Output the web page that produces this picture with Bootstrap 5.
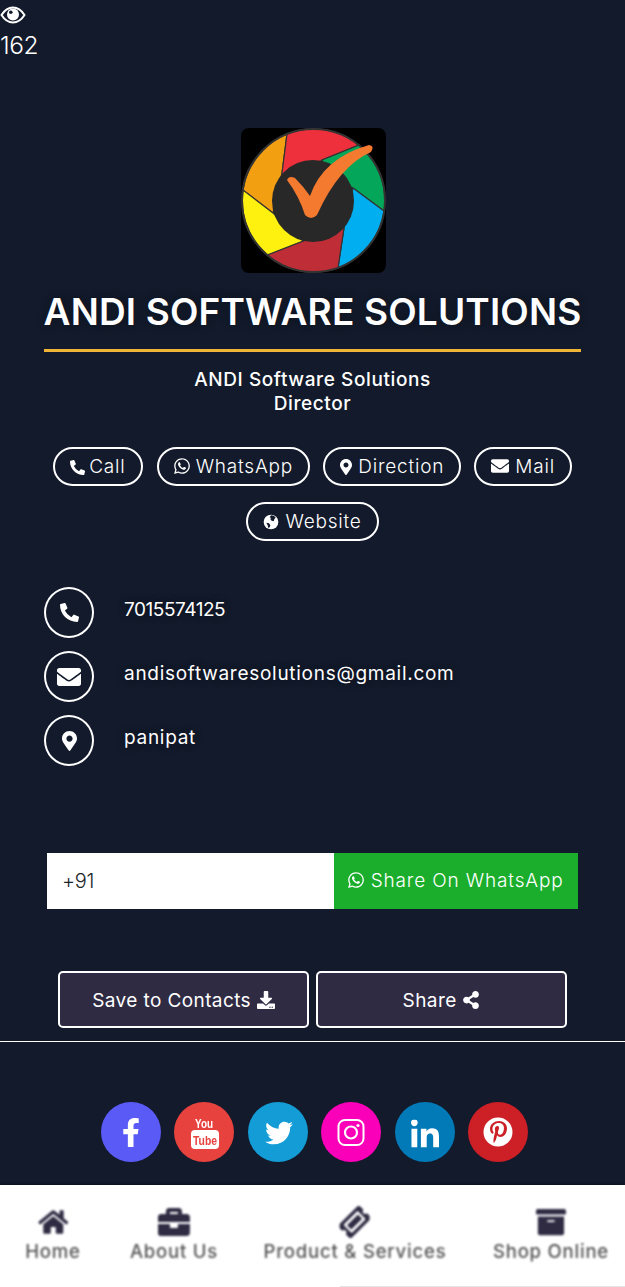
<!DOCTYPE html>
<html lang="en">
<head>
  <meta charset="UTF-8">
  <meta name="viewport" content="width=device-width, initial-scale=1.0">
  <title>ANDI Software Solutions</title>
  <link href="https://cdn.jsdelivr.net/npm/bootstrap@5.3.3/dist/css/bootstrap.min.css" rel="stylesheet">
  <style>
    body {
      background-color: #121a2b;
      color: #fff;
      font-family: Inter, "Open Sans", sans-serif;
      height: 1287px;
      overflow: hidden;
    }
    svg { fill: currentColor; display: inline-block; vertical-align: -2px; }
    .views { height: 128px; font-size: 24.5px; line-height: 26px; font-weight: 300; padding-top: 5px; letter-spacing: -.5px; }
    .views svg { display: block; width: 26px; height: 20px; margin-bottom: 7px; fill: none; }
    .logo-box { width: 145px; height: 145px; background: #000; border-radius: 8px; margin-left: 241px; }
    .logo-box svg { display: block; width: 145px; height: 145px; }
    .biz-name { font-size: 37px; line-height: 42px; font-weight: 600; letter-spacing: .17px; margin: 18px 0 0; text-shadow: 0 0 10px rgba(0,0,0,.35); white-space: nowrap; }
    .gold-rule { width: 537px; height: 3px; background: #f0b437; margin: 16px auto 16px; }
    .biz-role { font-size: 19px; line-height: 24px; font-weight: 500; letter-spacing: .6px; }
    .pill-wrap { margin-top: 31px; row-gap: 16px; column-gap: 13px; height: 93px; }
    .pill-btn { color: #fff; border: 2px solid #fff; font-size: 19px; line-height: 24px; padding: 6px 15px 4px; height: 39px; background: transparent; font-weight: 300; white-space: nowrap; letter-spacing: .8px; }
    .call-pill { margin-right: 1px; }
    .ic-phone { width: 15px; height: 15px; margin-right: -2px; }
    .ic-wa { width: 16px; height: 18px; }
    .ic-pin { width: 12px; height: 16px; }
    .ic-mail { width: 18px; height: 18px; }
    .ic-globe { width: 16px; height: 16px; }
    .contact-list { margin: 47px 0 0 44px; row-gap: 13px; }
    .contact-ring { width: 50px; height: 51px; border: 2px solid #fff; flex-shrink: 0; }
    .ring-phone { width: 19px; height: 19px; vertical-align: 0; }
    .ring-mail { width: 24px; height: 24px; vertical-align: 0; }
    .ring-pin { width: 15px; height: 20px; vertical-align: 0; }
    .contact-text { font-size: 19px; line-height: 24px; margin-left: 30px; padding-top: 11px; letter-spacing: .72px; text-shadow: 0 0 8px rgba(0,0,0,.4); }
    .phone-num { letter-spacing: -.45px; }
    .share-row { margin: 87px 47px 0; height: 56px; }
    .phone-field { flex: 0 0 287px; background: #fff; color: #212529; font-size: 20px; padding: 0 15px; border: 0; border-radius: 0; font-weight: 300; letter-spacing: -.3px; }
    .wa-btn { background: #1bae2c; color: #fff; flex: 1; border: 0; border-radius: 0; font-size: 19px; font-weight: 300; white-space: nowrap; padding: 1px 0 0; letter-spacing: .85px; }
    .save-row { margin: 62px 58px 0; column-gap: 7px; }
    .dark-btn { width: 251px; height: 57px; background: #2f2b43; color: #fff; border: 2px solid #fff; border-radius: 5px; font-size: 19px; font-weight: 400; letter-spacing: .4px; padding-top: 9px; }
    .dark-btn svg { width: 18px; height: 18px; }
    .white-rule { height: 1px; background: #fff; margin-top: 13px; }
    .social-row { margin-top: 60px; padding-left: 4px; column-gap: 13.4px; height: 83px; filter: blur(.7px); }
    .social-dot { width: 60px; height: 60px; color: #fff; flex-shrink: 0; }
    .bottom-bar { height: 102px; background: #fff; box-shadow: 0 -1px 2px rgba(0,0,0,.4); position: relative; }
    .bar-item { position: absolute; top: 21px; transform: translateX(-50%); color: #2f2b43; white-space: nowrap; text-align: center; filter: blur(.8px); }
    .bar-item svg { display: block; margin: 0 auto 1px; width: 30px; height: 32px; }
    .bar-item .bar-brief { width: 32px; }
    .bar-item span { display: block; color: #555; font-size: 18.5px; line-height: 24px; font-weight: 500; letter-spacing: .8px; }
    .corner-line { position: absolute; left: 340px; right: 0; bottom: 0; height: 1px; background: #e4e4e4; }
  </style>
</head>
<body>
  <!-- view counter -->
  <div class="views">
    <svg viewBox="0 0 26 20"><path d="M1.500 10C5 4.500 9 2.500 13 2.500S21 4.500 24.500 10C21 15.500 17 17.500 13 17.500S5 15.500 1.500 10Z" stroke="#fff" stroke-width="2"/><circle cx="13" cy="9.500" r="6" fill="#fff"/><circle cx="10.800" cy="7.200" r="1.800" fill="#121a2b"/></svg>
    <div>162</div>
  </div>

  <!-- logo + name -->
  <div class="logo-box">
    <svg viewBox="0 0 145 145">
      <g stroke="#333" stroke-width="1.200">
        <path fill="#f29f12" d="M46 6 L41 45 L32 85 L2 62 A72 72 0 0 1 46 6Z"/>
        <path fill="#ee2f3c" d="M46 6 A72 72 0 0 1 118 17 L81 32 L50 60 L41 45Z"/>
        <path fill="#04a659" d="M81 32 L118 17 A72 72 0 0 1 143 83 L112 60 L90 50Z"/>
        <path fill="#01aef0" d="M112 60 L143 83 A72 72 0 0 1 97 140 L103 100Z"/>
        <path fill="#bf2e36" d="M103 100 L97 140 A72 72 0 0 1 26 127 L62 113Z"/>
        <path fill="#fff10f" d="M32 85 L62 113 L26 127 A72 72 0 0 1 2 62Z"/>
        <circle cx="72.500" cy="72.500" r="71.500" fill="none" stroke-width="2"/>
      </g>
      <circle cx="72" cy="73" r="41" fill="#282828"/>
      <path fill="#f47a30" d="M46 52 Q48 47 54 50 Q62 58 69 68 Q82 30 128 17 Q134 18 130 24 Q98 38 76 87 Q70 93 64 87 Q58 68 46 52Z"/>
    </svg>
  </div>
  <h1 class="biz-name text-center">ANDI SOFTWARE SOLUTIONS</h1>
  <div class="gold-rule"></div>
  <div class="biz-role text-center">ANDI Software Solutions<br>Director</div>

  <!-- action pills -->
  <div class="pill-wrap d-flex flex-wrap justify-content-center">
    <a href="#" class="btn rounded-pill pill-btn call-pill"><svg class="ic-phone" viewBox="0 0 512 512"><use href="#i-phone"/></svg> Call</a>
    <a href="#" class="btn rounded-pill pill-btn"><svg class="ic-wa" viewBox="0 0 448 512"><use href="#i-wa"/></svg> WhatsApp</a>
    <a href="#" class="btn rounded-pill pill-btn"><svg class="ic-pin" viewBox="0 0 384 512"><use href="#i-pin"/></svg> Direction</a>
    <a href="#" class="btn rounded-pill pill-btn"><svg class="ic-mail" viewBox="0 0 512 512"><use href="#i-mail"/></svg> Mail</a>
    <a href="#" class="btn rounded-pill pill-btn"><svg class="ic-globe" viewBox="0 0 24 24"><circle cx="12" cy="12" r="11"/><path fill="#121a2b" d="M12 2c3 0 5 1 7 3l-2 3-1 3-3-1-2-2 1-2-2-1zM5 13l4 1 2 3-1 3-2 1-1-4z"/></svg> Website</a>
  </div>

  <!-- contact details -->
  <div class="contact-list d-flex flex-column">
    <div class="d-flex">
      <div class="contact-ring rounded-circle d-flex align-items-center justify-content-center"><svg class="ring-phone" viewBox="0 0 512 512"><use href="#i-phone"/></svg></div>
      <div class="contact-text phone-num">7015574125</div>
    </div>
    <div class="d-flex">
      <div class="contact-ring rounded-circle d-flex align-items-center justify-content-center"><svg class="ring-mail" viewBox="0 0 512 512"><use href="#i-mail"/></svg></div>
      <div class="contact-text">andisoftwaresolutions@gmail.com</div>
    </div>
    <div class="d-flex">
      <div class="contact-ring rounded-circle d-flex align-items-center justify-content-center"><svg class="ring-pin" viewBox="0 0 384 512"><use href="#i-pin"/></svg></div>
      <div class="contact-text">panipat</div>
    </div>
  </div>

  <!-- share on whatsapp -->
  <div class="share-row d-flex">
    <input class="form-control phone-field" type="text" value="+91">
    <button class="btn wa-btn"><svg class="ic-wa" viewBox="0 0 448 512"><use href="#i-wa"/></svg> Share On WhatsApp</button>
  </div>

  <div class="save-row d-flex">
    <button class="btn dark-btn">Save to Contacts <svg viewBox="0 0 512 512"><path d="M216 0h80c13.300 0 24 10.700 24 24v168h87.700c17.800 0 26.700 21.500 14.100 34.100L269.700 378.300c-7.500 7.500-19.800 7.500-27.300 0L90.100 226.100c-12.600-12.600-3.700-34.100 14.100-34.100H192V24c0-13.300 10.700-24 24-24zm296 376v112c0 13.300-10.700 24-24 24H24c-13.300 0-24-10.700-24-24V376c0-13.300 10.700-24 24-24h146.700l49 49c20.100 20.100 52.500 20.100 72.600 0l49-49H488c13.300 0 24 10.700 24 24zm-124 88c0-11-9-20-20-20s-20 9-20 20 9 20 20 20 20-9 20-20zm64 0c0-11-9-20-20-20s-20 9-20 20 9 20 20 20 20-9 20-20z"/></svg></button>
    <button class="btn dark-btn">Share <svg viewBox="0 0 448 512"><path d="M352 320c-22.608 0-43.387 7.819-59.790 20.895l-102.486-64.054a96.551 96.551 0 0 0 0-41.683l102.486-64.054C308.613 184.181 329.392 192 352 192c53.019 0 96-42.981 96-96S405.019 0 352 0s-96 42.981-96 96c0 7.158.79 14.130 2.276 20.841L155.790 180.895C139.387 167.819 118.608 160 96 160c-53.019 0-96 42.981-96 96s42.981 96 96 96c22.608 0 43.387-7.819 59.790-20.895l102.486 64.054A96.301 96.301 0 0 0 256 416c0 53.019 42.981 96 96 96s96-42.981 96-96-42.981-96-96-96z"/></svg></button>
  </div>
  <div class="white-rule"></div>

  <!-- social links -->
  <div class="social-row d-flex justify-content-center">
    <svg class="social-dot" viewBox="0 0 60 60"><circle cx="30" cy="30" r="30" fill="#5a5bf6"/><svg x="21" y="16" width="18" height="29" viewBox="0 0 320 512"><path fill="#fff" d="M279.140 288l14.220-92.660h-88.910v-60.130c0-25.350 12.420-50.060 52.240-50.060h40.420V6.260S260.430 0 225.360 0c-73.220 0-121.080 44.380-121.080 124.720v70.620H22.890V288h81.390v224h100.170V288z"/></svg></svg>
    <svg class="social-dot" viewBox="0 0 60 60"><circle cx="30" cy="30" r="30" fill="#e8423e"/><text x="30" y="26" text-anchor="middle" font-family="Liberation Sans" font-weight="700" font-size="12" textLength="18" lengthAdjust="spacingAndGlyphs" fill="#fff">You</text><rect x="17" y="28" width="28" height="19" rx="4" fill="#fff"/><text x="31" y="42.500" text-anchor="middle" font-family="Liberation Sans" font-weight="700" font-size="13" textLength="24" lengthAdjust="spacingAndGlyphs" fill="#e8423e">Tube</text></svg>
    <svg class="social-dot" viewBox="0 0 60 60"><circle cx="30" cy="30" r="30" fill="#149cd6"/><svg x="17" y="17" width="28" height="28" viewBox="0 0 512 512"><path fill="#fff" d="M459.370 151.716c.325 4.548.325 9.097.325 13.645 0 138.720-105.583 298.558-298.558 298.558-59.452 0-114.680-17.219-161.137-47.106 8.447.974 16.568 1.299 25.340 1.299 49.055 0 94.213-16.568 130.274-44.832-46.132-.975-84.792-31.188-98.112-72.772 6.498.974 12.995 1.624 19.818 1.624 9.421 0 18.843-1.300 27.614-3.573-48.081-9.747-84.143-51.980-84.143-102.985v-1.299c13.969 7.797 30.214 12.670 47.431 13.319-28.264-18.843-46.781-51.005-46.781-87.391 0-19.492 5.197-37.360 14.294-52.954 51.655 63.675 129.300 105.258 216.365 109.807-1.624-7.797-2.599-15.918-2.599-24.040 0-57.828 46.782-104.934 104.934-104.934 30.213 0 57.502 12.670 76.670 33.137 23.715-4.548 46.456-13.320 66.599-25.340-7.798 24.366-24.366 44.833-46.132 57.827 21.117-2.273 41.584-8.122 60.426-16.243-14.292 20.791-32.161 39.308-52.628 54.253z"/></svg></svg>
    <svg class="social-dot" viewBox="0 0 60 60"><circle cx="30" cy="30" r="30" fill="#fa00b8"/><rect x="17.500" y="18" width="25" height="25" rx="6.500" fill="none" stroke="#fff" stroke-width="2"/><circle cx="30" cy="30.500" r="6" fill="none" stroke="#fff" stroke-width="2.200"/><circle cx="37" cy="23.500" r="1.600" fill="#fff"/></svg>
    <svg class="social-dot" viewBox="0 0 60 60"><circle cx="30" cy="30" r="30" fill="#027ab8"/><svg x="16" y="17.500" width="28" height="28" viewBox="0 0 448 448"><path fill="#fff" d="M100.280 448H7.400V148.900h92.880zM53.790 108.100C24.090 108.100 0 83.500 0 53.800a53.790 53.790 0 0 1 107.580 0c0 29.700-24.100 54.300-53.790 54.300zM447.900 448h-92.680V302.400c0-34.700-.7-79.200-48.290-79.200-48.290 0-55.690 37.700-55.690 76.700V448h-92.780V148.900h89.080v40.800h1.300c12.400-23.500 42.690-48.300 87.880-48.300 94 0 111.280 61.900 111.280 142.300V448z"/></svg></svg>
    <svg class="social-dot" viewBox="0 0 60 60"><circle cx="30" cy="30" r="30" fill="#cc1f26"/><circle cx="30" cy="30" r="14.500" fill="#fff"/><svg x="22" y="17" width="17" height="26" viewBox="0 0 384 512"><path fill="#cc1f26" d="M204 6.500C101.400 6.500 0 74.900 0 185.600 0 256 39.600 296 63.600 296c9.900 0 15.600-27.600 15.600-35.400 0-9.300-23.700-29.100-23.700-67.800 0-80.400 61.200-137.400 140.400-137.400 68.100 0 118.500 38.700 118.500 109.800 0 53.100-21.300 152.700-90.300 152.700-24.900 0-46.200-18-46.200-43.800 0-37.800 26.400-74.400 26.400-113.400 0-66.200-93.900-54.200-93.900 25.800 0 16.800 2.100 35.400 9.600 50.700-13.800 59.400-42 147.900-42 209.100 0 18.900 2.700 37.500 4.500 56.400 3.400 3.800 1.700 3.400 6.900 1.500 50.400-69 48.600-82.500 71.400-172.800 12.300 23.400 44.100 36 69.300 36 106.200 0 153.900-103.500 153.900-196.800C384 71.300 298.200 6.500 204 6.500z"/></svg></svg>
  </div>

  <!-- bottom nav -->
  <div class="bottom-bar">
    <a class="bar-item text-decoration-none" href="#" style="left:53px"><svg viewBox="0 0 576 512"><path d="M280.370 148.260L96 300.110V464a16 16 0 0 0 16 16l112.060-.29a16 16 0 0 0 15.920-16V368a16 16 0 0 1 16-16h64a16 16 0 0 1 16 16v95.640a16 16 0 0 0 16 16.050L464 480a16 16 0 0 0 16-16V300L295.670 148.260a12.190 12.190 0 0 0-15.300 0zM571.600 251.470L488 182.560V44.050a12 12 0 0 0-12-12h-56a12 12 0 0 0-12 12v72.610L318.470 43a48 48 0 0 0-61 0L4.340 251.470a12 12 0 0 0-1.600 16.900l25.500 31A12 12 0 0 0 45.150 301l235.220-193.740a12.190 12.190 0 0 1 15.300 0L530.900 301a12 12 0 0 0 16.900-1.600l25.500-31a12 12 0 0 0-1.700-16.930z"/></svg><span>Home</span></a>
    <a class="bar-item text-decoration-none" href="#" style="left:174px"><svg class="bar-brief" viewBox="0 0 512 512"><path d="M320 336c0 8.840-7.160 16-16 16h-96c-8.840 0-16-7.160-16-16v-48H0v144c0 25.600 22.400 48 48 48h416c25.600 0 48-22.400 48-48V288H320v48zm144-208h-80V80c0-25.600-22.400-48-48-48H176c-25.600 0-48 22.400-48 48v48H48c-25.600 0-48 22.400-48 48v80h512v-80c0-25.600-22.400-48-48-48zm-144 0H192V96h128v32z"/></svg><span>About Us</span></a>
    <a class="bar-item text-decoration-none" href="#" style="left:355px"><svg viewBox="0 0 576 576"><g transform="rotate(-45 288 288)"><rect x="140" y="230" width="296" height="116" fill="currentColor"/><path fill-rule="evenodd" d="M528 288c0 26.510 21.490 48 48 48v80c0 26.510-21.490 48-48 48H48c-26.510 0-48-21.490-48-48v-80c26.510 0 48-21.490 48-48s-21.490-48-48-48v-80c0-26.510 21.490-48 48-48h480c26.510 0 48 21.490 48 48v80c-26.510 0-48 21.490-48 48zM120 176c-13.255 0-24 10.745-24 24v176c0 13.255 10.745 24 24 24h336c13.255 0 24-10.745 24-24V200c0-13.255-10.745-24-24-24z"/></g></svg><span>Product &amp; Services</span></a>
    <a class="bar-item text-decoration-none" href="#" style="left:551px"><svg viewBox="0 0 512 512"><path d="M32 448c0 17.700 14.300 32 32 32h384c17.700 0 32-14.300 32-32V160H32v288zm160-212c0-6.600 5.400-12 12-12h104c6.600 0 12 5.400 12 12v8c0 6.600-5.400 12-12 12H204c-6.600 0-12-5.400-12-12v-8zM480 32H32C14.300 32 0 46.300 0 64v48c0 8.800 7.200 16 16 16h480c8.800 0 16-7.200 16-16V64c0-17.700-14.300-32-32-32z"/></svg><span>Shop Online</span></a>
    <div class="corner-line"></div>
  </div>

  <!-- shared icon shapes -->
  <svg width="0" height="0" class="position-absolute">
    <defs>
      <path id="i-phone" d="M497.390 361.800l-112-48a24 24 0 0 0-28 6.900l-49.600 60.600A370.660 370.660 0 0 1 130.600 204.110l60.600-49.600a23.940 23.940 0 0 0 6.900-28l-48-112A24.160 24.160 0 0 0 122.600.61l-104 24A24 24 0 0 0 0 48c0 256.500 207.900 464 464 464a24 24 0 0 0 23.400-18.600l24-104a24.290 24.290 0 0 0-14.010-27.600z"/>
      <path id="i-mail" d="M502.300 190.800c3.900-3.100 9.700-.2 9.700 4.700V400c0 26.500-21.500 48-48 48H48c-26.500 0-48-21.500-48-48V195.600c0-5 5.700-7.800 9.700-4.700 22.400 17.400 52.100 39.500 154.100 113.600 21.100 15.400 56.700 47.800 92.200 47.600 35.700.3 72-32.800 92.300-47.600 102-74.100 131.600-96.300 154-113.700zM256 320c23.200.4 56.600-29.200 73.400-41.400 132.700-96.300 142.800-104.700 173.400-128.700 5.800-4.500 9.200-11.500 9.200-18.900v-19c0-26.500-21.500-48-48-48H48C21.500 64 0 85.500 0 112v19c0 7.400 3.400 14.300 9.200 18.900 30.600 23.900 40.700 32.400 173.400 128.700 16.800 12.200 50.200 41.800 73.400 41.400z"/>
      <path id="i-pin" d="M172.268 501.670C26.970 291.031 0 260.559 0 192 0 85.961 85.961 0 192 0s192 85.961 192 192c0 68.559-26.970 99.031-172.268 309.670-9.535 13.774-29.930 13.773-39.464 0zM192 272c44.183 0 80-35.817 80-80s-35.817-80-80-80-80 35.817-80 80 35.817 80 80 80z"/>
      <path id="i-wa" d="M380.900 97.100C339 55.100 283.200 32 223.900 32c-122.400 0-222 99.600-222 222 0 39.100 10.200 77.300 29.600 111L0 480l117.700-30.900c32.400 17.700 68.900 27 106.100 27h.1c122.300 0 224.100-99.600 224.100-222 0-59.300-25.200-115-67.100-157zm-157 341.600c-33.200 0-65.700-8.900-94-25.700l-6.700-4-69.800 18.300L72 359.200l-4.400-7c-18.500-29.400-28.200-63.300-28.200-98.200 0-101.700 82.800-184.500 184.600-184.500 49.300 0 95.600 19.200 130.400 54.100 34.800 34.900 56.200 81.200 56.100 130.500 0 101.800-84.900 184.600-186.600 184.600zm101.200-138.200c-5.500-2.800-32.800-16.200-37.900-18-5.100-1.900-8.800-2.800-12.500 2.800-3.700 5.600-14.300 18-17.600 21.800-3.200 3.700-6.500 4.200-12 1.400-32.600-16.300-54-29.100-75.500-66-5.700-9.800 5.700-9.100 16.300-30.300 1.800-3.700.9-6.900-.5-9.700-1.400-2.800-12.500-30.100-17.100-41.200-4.500-10.800-9.100-9.300-12.500-9.500-3.200-.2-6.900-.2-10.600-.2-3.700 0-9.700 1.400-14.800 6.900-5.100 5.600-19.400 19-19.400 46.300 0 27.300 19.900 53.700 22.600 57.400 2.800 3.700 39.100 59.700 94.800 83.800 35.200 15.200 49 16.500 66.600 13.900 10.700-1.600 32.800-13.400 37.400-26.400 4.600-13 4.600-24.100 3.200-26.400-1.300-2.500-5-3.900-10.500-6.600z"/>
    </defs>
  </svg>

  <script src="https://cdn.jsdelivr.net/npm/bootstrap@5.3.3/dist/js/bootstrap.bundle.min.js"></script>
</body>
</html>
